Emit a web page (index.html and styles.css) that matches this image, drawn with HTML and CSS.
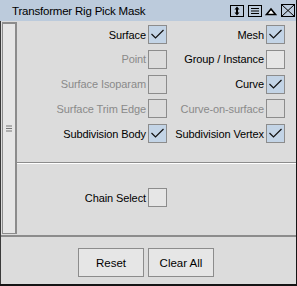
FILE: index.html
```html
<!DOCTYPE html>
<html lang="en">
<head>
    <meta charset="UTF-8">
    <title>Transformer Rig Pick Mask</title>
    <link rel="stylesheet" href="styles.css">
</head>
<body>
    <div class="window">
        <div class="titlebar">
            <span class="title">Transformer Rig Pick Mask</span>
            <div class="tools">
                <span class="tool box">
                    <svg width="12" height="10" viewBox="0 0 12 10">
                        <path d="M6 0.5 L8.5 3.5 H3.5 Z M6 9.5 L8.5 6.5 H3.5 Z" fill="#000"/>
                        <rect x="5" y="3" width="2" height="4" fill="#000"/>
                    </svg>
                </span>
                <span class="tool box">
                    <svg width="12" height="10" viewBox="0 0 12 10">
                        <path d="M2 2.5 H10 M2 5 H10 M2 7.5 H10" stroke="#000" stroke-width="1"/>
                    </svg>
                </span>
                <span class="tool tri">
                    <svg width="12" height="12" viewBox="0 0 12 12">
                        <path d="M1.5 9.5 L6 4 L10.5 9.5 Z" fill="#fff" stroke="#000" stroke-width="1.6"/>
                    </svg>
                </span>
                <span class="tool box close">
                    <svg width="12" height="11" viewBox="0 0 12 11">
                        <path d="M0 0 L12 11 M12 0 L0 11" stroke="#000" stroke-width="1"/>
                    </svg>
                </span>
            </div>
        </div>

        <div class="main">
            <div class="strip">
                <svg width="6" height="7" viewBox="0 0 6 7">
                    <path d="M0 1 H6 M0 3.5 H6 M0 6 H6" stroke="#777" stroke-width="1"/>
                </svg>
            </div>
            <div class="panel">
                <div class="grid">
                    <span class="label">Surface</span><span class="cb on"></span>
                    <span class="label">Mesh</span><span class="cb on"></span>

                    <span class="label dim">Point</span><span class="cb off"></span>
                    <span class="label">Group / Instance</span><span class="cb"></span>

                    <span class="label dim">Surface Isoparam</span><span class="cb off"></span>
                    <span class="label">Curve</span><span class="cb on"></span>

                    <span class="label dim">Surface Trim Edge</span><span class="cb off"></span>
                    <span class="label dim">Curve-on-surface</span><span class="cb off"></span>

                    <span class="label">Subdivision Body</span><span class="cb on"></span>
                    <span class="label">Subdivision Vertex</span><span class="cb on"></span>
                </div>
                <div class="sep"></div>
                <div class="grid chain">
                    <span class="label">Chain Select</span><span class="cb"></span>
                </div>
            </div>
        </div>

        <div class="divider"></div>

        <div class="footer">
            <button class="btn">Reset</button>
            <button class="btn">Clear All</button>
        </div>
    </div>
</body>
</html>
```

FILE: styles.css
```css
body {
    margin: 0;
    font-family: "Liberation Sans", Arial, sans-serif;
    font-size: 11px;
    background: #dcdcdc;
}
.window {
    width: 297px;
    height: 286px;
    box-sizing: border-box;
    display: flex;
    flex-direction: column;
    background: #dcdcdc;
    border-right: 1px solid #151515;
    border-bottom: 2px solid #151515;
}
.titlebar {
    height: 21px;
    flex: none;
    display: flex;
    align-items: center;
    background: #bccbdc;
    padding-left: 12px;
    color: #000;
    font-size: 11.5px;
}
.title {
    flex: 1;
    letter-spacing: -0.2px;
}
.tools {
    flex: none;
    width: 65px;
    display: flex;
    align-items: center;
    justify-content: space-between;
    margin-right: 1px;
}
.tool {
    flex: none;
    display: flex;
    align-items: center;
    justify-content: center;
}
.tool svg {
    display: block;
}
.tool.box {
    width: 14px;
    height: 12px;
    box-sizing: border-box;
    border: 1px solid #000;
}
.tool.close {
    height: 13px;
}
.tool.tri {
    width: 12px;
    height: 12px;
}
.main {
    height: 214px;
    flex: none;
    display: flex;
    border-left: 1px solid #3a3a3a;
}
.strip {
    width: 15px;
    flex: none;
    box-sizing: border-box;
    margin: 1px 0 1px 1px;
    background: #e6e6e6;
    border: 1px solid #8c8c8c;
    border-right-width: 2px;
    border-top-width: 2px;
    display: flex;
    align-items: center;
    justify-content: center;
}
.panel {
    flex: 1;
    padding-top: 4px;
}
.grid {
    display: grid;
    grid-template-columns: 129px 19px 95px 19px;
    column-gap: 2px;
    row-gap: 5.75px;
    align-items: center;
}
.label {
    text-align: right;
    color: #000;
    white-space: nowrap;
    letter-spacing: -0.1px;
}
.label.dim {
    color: #8a8a8a;
}
.cb {
    width: 19px;
    height: 19px;
    box-sizing: border-box;
    border: 1px solid #8c8c8c;
    background: #e6e6e6;
}
.cb.off {
    background: #dcdcdc;
}
.cb.on {
    background: #c3d4e6 url("data:image/svg+xml,%3Csvg xmlns='http://www.w3.org/2000/svg' width='17' height='17'%3E%3Cpath d='M2.5 8 L6.5 12 L14.5 4' fill='none' stroke='%23111' stroke-width='1.2'/%3E%3C/svg%3E") no-repeat center;
}
.sep {
    margin-top: 19px;
    height: 1px;
    background: #8c8c8c;
    border-bottom: 1px solid #fff;
}
.chain {
    margin-top: 24px;
}
.divider {
    height: 2px;
    flex: none;
    background: #8c8c8c;
    border-left: 1px solid #3a3a3a;
}
.footer {
    flex: 1;
    display: flex;
    align-items: flex-start;
    gap: 4px;
    padding: 11px 0 0 77px;
    border-left: 1px solid #3a3a3a;
}
.btn {
    height: 29px;
    width: 66px;
    box-sizing: border-box;
    border: 1px solid #8c8c8c;
    background: #e6e6e6;
    font-family: "Liberation Sans", Arial, sans-serif;
    font-size: 11.5px;
    color: #000;
    padding: 0;
}
```
